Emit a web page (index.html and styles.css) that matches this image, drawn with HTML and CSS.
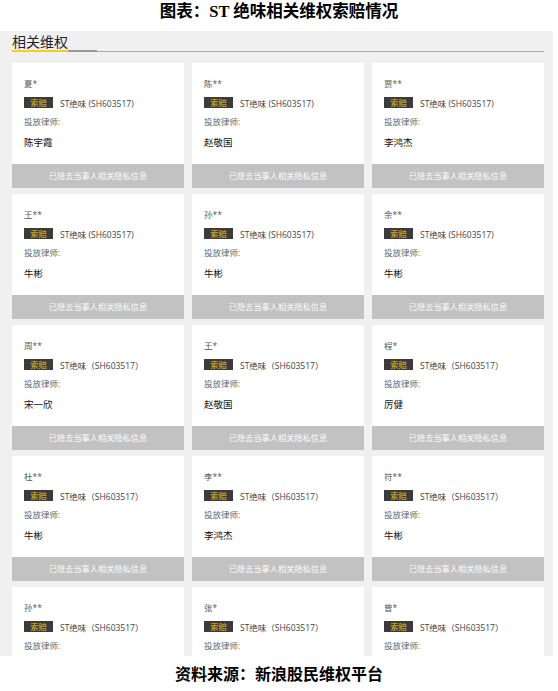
FILE: index.html
```html
<!DOCTYPE html>
<html lang="zh-CN">
<head>
  <meta charset="UTF-8">
  <title>图表：ST 绝味相关维权索赔情况</title>
  <link rel="stylesheet" href="styles.css">
</head>
<body>
  <h1 class="title">图表：ST 绝味相关维权索赔情况</h1>

  <div class="panel">
    <div class="tabbar">
      <span class="tab">相关维权</span>
      <span class="tab-tail"></span>
    </div>

    <div class="cards">
      <div class="card">
        <div class="card-body">
          <div class="person">夏*</div>
          <div class="stock"><span class="badge">索赔</span><span class="code">ST绝味 (SH603517)</span></div>
          <div class="label">投放律师:</div>
          <div class="lawyer">陈宇霞</div>
        </div>
        <div class="card-foot">已隐去当事人相关隐私信息</div>
      </div>
      <div class="card">
        <div class="card-body">
          <div class="person">陈**</div>
          <div class="stock"><span class="badge">索赔</span><span class="code">ST绝味 (SH603517)</span></div>
          <div class="label">投放律师:</div>
          <div class="lawyer">赵敬国</div>
        </div>
        <div class="card-foot">已隐去当事人相关隐私信息</div>
      </div>
      <div class="card">
        <div class="card-body">
          <div class="person">贾**</div>
          <div class="stock"><span class="badge">索赔</span><span class="code">ST绝味 (SH603517)</span></div>
          <div class="label">投放律师:</div>
          <div class="lawyer">李鸿杰</div>
        </div>
        <div class="card-foot">已隐去当事人相关隐私信息</div>
      </div>

      <div class="card">
        <div class="card-body">
          <div class="person">王**</div>
          <div class="stock"><span class="badge">索赔</span><span class="code">ST绝味 (SH603517)</span></div>
          <div class="label">投放律师:</div>
          <div class="lawyer">牛彬</div>
        </div>
        <div class="card-foot">已隐去当事人相关隐私信息</div>
      </div>
      <div class="card">
        <div class="card-body">
          <div class="person">孙**</div>
          <div class="stock"><span class="badge">索赔</span><span class="code">ST绝味 (SH603517)</span></div>
          <div class="label">投放律师:</div>
          <div class="lawyer">牛彬</div>
        </div>
        <div class="card-foot">已隐去当事人相关隐私信息</div>
      </div>
      <div class="card">
        <div class="card-body">
          <div class="person">余**</div>
          <div class="stock"><span class="badge">索赔</span><span class="code">ST绝味 (SH603517)</span></div>
          <div class="label">投放律师:</div>
          <div class="lawyer">牛彬</div>
        </div>
        <div class="card-foot">已隐去当事人相关隐私信息</div>
      </div>

      <div class="card">
        <div class="card-body">
          <div class="person">周**</div>
          <div class="stock"><span class="badge">索赔</span><span class="code">ST绝味（SH603517）</span></div>
          <div class="label">投放律师:</div>
          <div class="lawyer">宋一欣</div>
        </div>
        <div class="card-foot">已隐去当事人相关隐私信息</div>
      </div>
      <div class="card">
        <div class="card-body">
          <div class="person">王*</div>
          <div class="stock"><span class="badge">索赔</span><span class="code">ST绝味（SH603517）</span></div>
          <div class="label">投放律师:</div>
          <div class="lawyer">赵敬国</div>
        </div>
        <div class="card-foot">已隐去当事人相关隐私信息</div>
      </div>
      <div class="card">
        <div class="card-body">
          <div class="person">程*</div>
          <div class="stock"><span class="badge">索赔</span><span class="code">ST绝味（SH603517）</span></div>
          <div class="label">投放律师:</div>
          <div class="lawyer">厉健</div>
        </div>
        <div class="card-foot">已隐去当事人相关隐私信息</div>
      </div>

      <div class="card">
        <div class="card-body">
          <div class="person">杜**</div>
          <div class="stock"><span class="badge">索赔</span><span class="code">ST绝味（SH603517）</span></div>
          <div class="label">投放律师:</div>
          <div class="lawyer">牛彬</div>
        </div>
        <div class="card-foot">已隐去当事人相关隐私信息</div>
      </div>
      <div class="card">
        <div class="card-body">
          <div class="person">李**</div>
          <div class="stock"><span class="badge">索赔</span><span class="code">ST绝味（SH603517）</span></div>
          <div class="label">投放律师:</div>
          <div class="lawyer">李鸿杰</div>
        </div>
        <div class="card-foot">已隐去当事人相关隐私信息</div>
      </div>
      <div class="card">
        <div class="card-body">
          <div class="person">符**</div>
          <div class="stock"><span class="badge">索赔</span><span class="code">ST绝味（SH603517）</span></div>
          <div class="label">投放律师:</div>
          <div class="lawyer">牛彬</div>
        </div>
        <div class="card-foot">已隐去当事人相关隐私信息</div>
      </div>

      <!-- last row is cut off by the panel -->
      <div class="card">
        <div class="card-body">
          <div class="person">孙**</div>
          <div class="stock"><span class="badge">索赔</span><span class="code">ST绝味（SH603517）</span></div>
          <div class="label">投放律师:</div>
        </div>
      </div>
      <div class="card">
        <div class="card-body">
          <div class="person">张*</div>
          <div class="stock"><span class="badge">索赔</span><span class="code">ST绝味（SH603517）</span></div>
          <div class="label">投放律师:</div>
        </div>
      </div>
      <div class="card">
        <div class="card-body">
          <div class="person">曾*</div>
          <div class="stock"><span class="badge">索赔</span><span class="code">ST绝味（SH603517）</span></div>
          <div class="label">投放律师:</div>
        </div>
      </div>
    </div>
  </div>

  <p class="source">资料来源：新浪股民维权平台</p>
</body>
</html>
```

FILE: styles.css
```css
body {
  margin: 0;
  padding: 0;
  background-color: #ffffff;
  font-family: 'Open Sans', 'Noto Sans CJK SC', sans-serif;
  color: #333;
}

.title {
  margin: 0 0 8px;
  height: 23px;
  line-height: 23px;
  text-align: center;
  font-family: 'Liberation Serif', 'Noto Sans CJK SC', serif;
  font-size: 16.5px;
  font-weight: bold;
  color: #000;
}

.panel {
  width: 553px;
  height: 625px;
  padding-top: 1px;
  box-sizing: border-box;
  background-color: #f0f0f0;
  overflow: hidden;
}

.tabbar {
  display: flex;
  align-items: flex-end;
  margin: 0 9px 0 12px;
  border-bottom: 1px solid #aaa;
}

.tab {
  font-family: 'Noto Sans CJK SC', sans-serif;
  font-size: 14px;
  line-height: 18px;
  color: #222;
  border-bottom: 2px solid #f7cf1a;
  margin-bottom: -1px;
}

.tab-tail {
  width: 29px;
  border-bottom: 2px solid #999;
  margin-bottom: -1px;
}

.cards {
  display: grid;
  grid-template-columns: repeat(3, 172px);
  column-gap: 8px;
  row-gap: 6px;
  margin: 11px 0 0 12px;
}

.card {
  background-color: #fff;
}

.card-body {
  padding: 14px 12px 13px;
}

.person {
  font-size: 8.5px;
  line-height: 14px;
  color: #555;
}

.stock {
  display: flex;
  align-items: center;
  margin-top: 6px;
  height: 11px;
}

.badge {
  display: inline-block;
  width: 29px;
  height: 11px;
  line-height: 11px;
  text-align: center;
  background-color: #3b3b3b;
  color: #e8be1c;
  font-size: 8.3px;
}

.code {
  margin-left: 7px;
  font-size: 8.5px;
  color: #444;
}

.label {
  margin-top: 7px;
  font-size: 8.5px;
  line-height: 14px;
  color: #666;
}

.lawyer {
  margin-top: 6px;
  font-size: 9.5px;
  line-height: 16px;
  color: #111;
}

.card-foot {
  height: 24px;
  line-height: 24px;
  text-align: center;
  background-color: #c2c2c2;
  color: #fafafa;
  font-size: 8.2px;
}

.source {
  margin: 4px 0 0;
  line-height: 30px;
  text-align: center;
  font-family: 'Liberation Serif', 'Noto Sans CJK SC', serif;
  font-size: 16px;
  font-weight: bold;
  color: #000;
}
```
